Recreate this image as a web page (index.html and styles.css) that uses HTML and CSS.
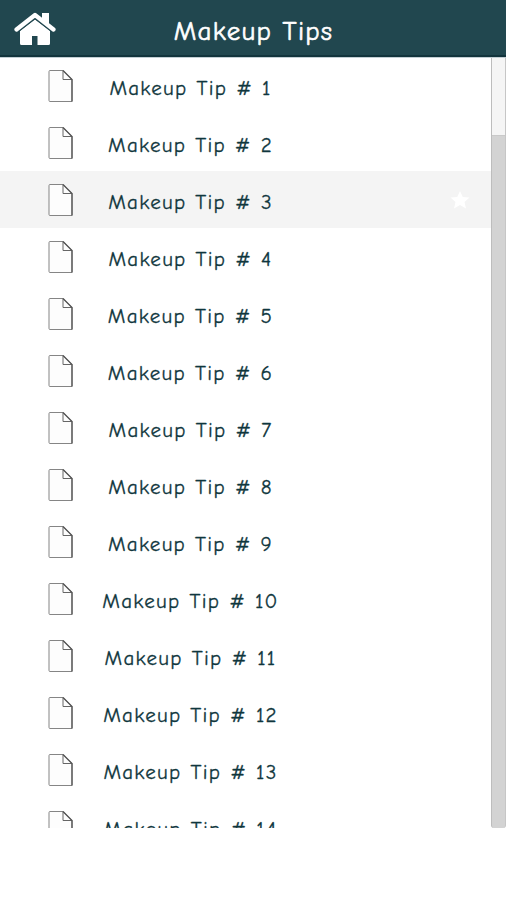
FILE: index.html
```
<!DOCTYPE html>
<html lang="en">
<head>
    <meta charset="UTF-8">
    <meta name="viewport" content="width=device-width, initial-scale=1.0">
    <title>Makeup Tips</title>
    <link rel="stylesheet" href="styles.css">
</head>
<body>
    <!-- shared icons -->
    <svg class="sprite">
        <symbol id="page" viewBox="0 0 26 34">
            <path d="M2 31.500V2.500Q2 1.500 3 1.500H16L25 10.500V32.500H3Q2 32.500 2 31.500" fill="#fdfdfd" stroke="#858585"/>
            <path d="M16 1.500V10.500H25" fill="none" stroke="#666"/>
            <path d="M16 1.500L25 10.500V32.500" fill="none" stroke="#555" stroke-width="1.300"/>
        </symbol>
    </svg>

    <header class="header">
        <a class="home" href="#" aria-label="Home">
            <svg width="42" height="36" viewBox="0 0 42 36">
                <path d="M21 9.500L6 21V33.500Q6 35 7.500 35H18V26H23.500V35H34.500Q36 35 36 33.500V21Z" fill="#fff"/>
                <path d="M2.500 20L21 5.500L39.500 20" fill="none" stroke="#21474f" stroke-width="6"/>
                <path d="M28 3H35V15L28 9Z" fill="#fff"/>
                <path d="M2.500 19.500L21 5L39.500 19.500" fill="none" stroke="#fff" stroke-width="4.200" stroke-linecap="round" stroke-linejoin="round"/>
            </svg>
        </a>
        <h1 class="title">Makeup Tips</h1>
    </header>

    <main class="content">
        <ul class="tips">
            <li class="tip"><svg class="icon"><use href="#page"/></svg><span class="name">Makeup Tip # 1</span></li>
            <li class="tip"><svg class="icon"><use href="#page"/></svg><span class="name">Makeup Tip # 2</span></li>
            <li class="tip active">
                <svg class="icon"><use href="#page"/></svg><span class="name">Makeup Tip # 3</span>
                <svg class="star" viewBox="0 0 20 18"><path d="M10 0L12.800 6L19.500 6.500L14.500 11L16 17.500L10 14L4 17.500L5.500 11L0.500 6.500L7.200 6Z" fill="#fff"/></svg>
            </li>
            <li class="tip"><svg class="icon"><use href="#page"/></svg><span class="name">Makeup Tip # 4</span></li>
            <li class="tip"><svg class="icon"><use href="#page"/></svg><span class="name">Makeup Tip # 5</span></li>
            <li class="tip"><svg class="icon"><use href="#page"/></svg><span class="name">Makeup Tip # 6</span></li>
            <li class="tip"><svg class="icon"><use href="#page"/></svg><span class="name">Makeup Tip # 7</span></li>
            <li class="tip"><svg class="icon"><use href="#page"/></svg><span class="name">Makeup Tip # 8</span></li>
            <li class="tip"><svg class="icon"><use href="#page"/></svg><span class="name">Makeup Tip # 9</span></li>
            <li class="tip"><svg class="icon"><use href="#page"/></svg><span class="name">Makeup Tip # 10</span></li>
            <li class="tip"><svg class="icon"><use href="#page"/></svg><span class="name">Makeup Tip # 11</span></li>
            <li class="tip"><svg class="icon"><use href="#page"/></svg><span class="name">Makeup Tip # 12</span></li>
            <li class="tip"><svg class="icon"><use href="#page"/></svg><span class="name">Makeup Tip # 13</span></li>
            <li class="tip"><svg class="icon"><use href="#page"/></svg><span class="name">Makeup Tip # 14</span></li>
        </ul>
        <div class="scrollbar">
            <div class="thumb"></div>
        </div>
    </main>
</body>
</html>
```

FILE: styles.css
```
* {
    box-sizing: border-box;
}
body {
    margin: 0;
    background-color: #fff;
    color: #0f363d;
    font-family: "Comic Neue", "Comic Sans MS", Lato, sans-serif;
}
.sprite {
    display: none;
}
.header {
    display: flex;
    align-items: center;
    height: 57px;
    padding: 0 14px;
    background-color: #21474f;
    border-bottom: 2px solid #12343c;
}
.home {
    width: 42px;
    height: 36px;
    margin-top: 1px;
}
.home svg {
    display: block;
}
.title {
    flex: 1;
    margin: 0;
    padding: 8px 41px 0 0;
    color: #fff;
    font-size: 27px;
    font-weight: 400;
    line-height: 32px;
    letter-spacing: 1.3px;
    word-spacing: 0;
    text-align: center;
    -webkit-text-stroke: 0.6px #fff;
}
.content {
    display: flex;
    height: 771px;
    border-top: 1px solid #c3cfd4;
    overflow: hidden;
}
.tips {
    flex: 1;
    margin: -1px 0 0;
    padding: 0;
    list-style: none;
}
.tip {
    display: flex;
    align-items: center;
    height: 57px;
    padding-left: 47px;
}
.active {
    background-color: #f4f4f4;
}
.icon {
    width: 26px;
    height: 34px;
}
.name {
    width: 235px;
    padding-top: 5px;
    font-size: 21px;
    line-height: 28px;
    letter-spacing: 1.25px;
    word-spacing: 0.8px;
    text-align: center;
    white-space: nowrap;
    -webkit-text-stroke: 0.3px #0f363d;
}
.star {
    width: 20px;
    height: 18px;
    margin-left: auto;
    margin-right: 21px;
}
.scrollbar {
    width: 15px;
    background-color: #d3d3d3;
    border-left: 1px solid #bdbdbd;
    border-right: 1px solid #c6c6c6;
    border-radius: 0 0 3px 3px;
}
.thumb {
    height: 78px;
    background-color: #f5f5f5;
    border: 1px solid #c9c9c9;
    border-width: 0 0 1px;
}
```
